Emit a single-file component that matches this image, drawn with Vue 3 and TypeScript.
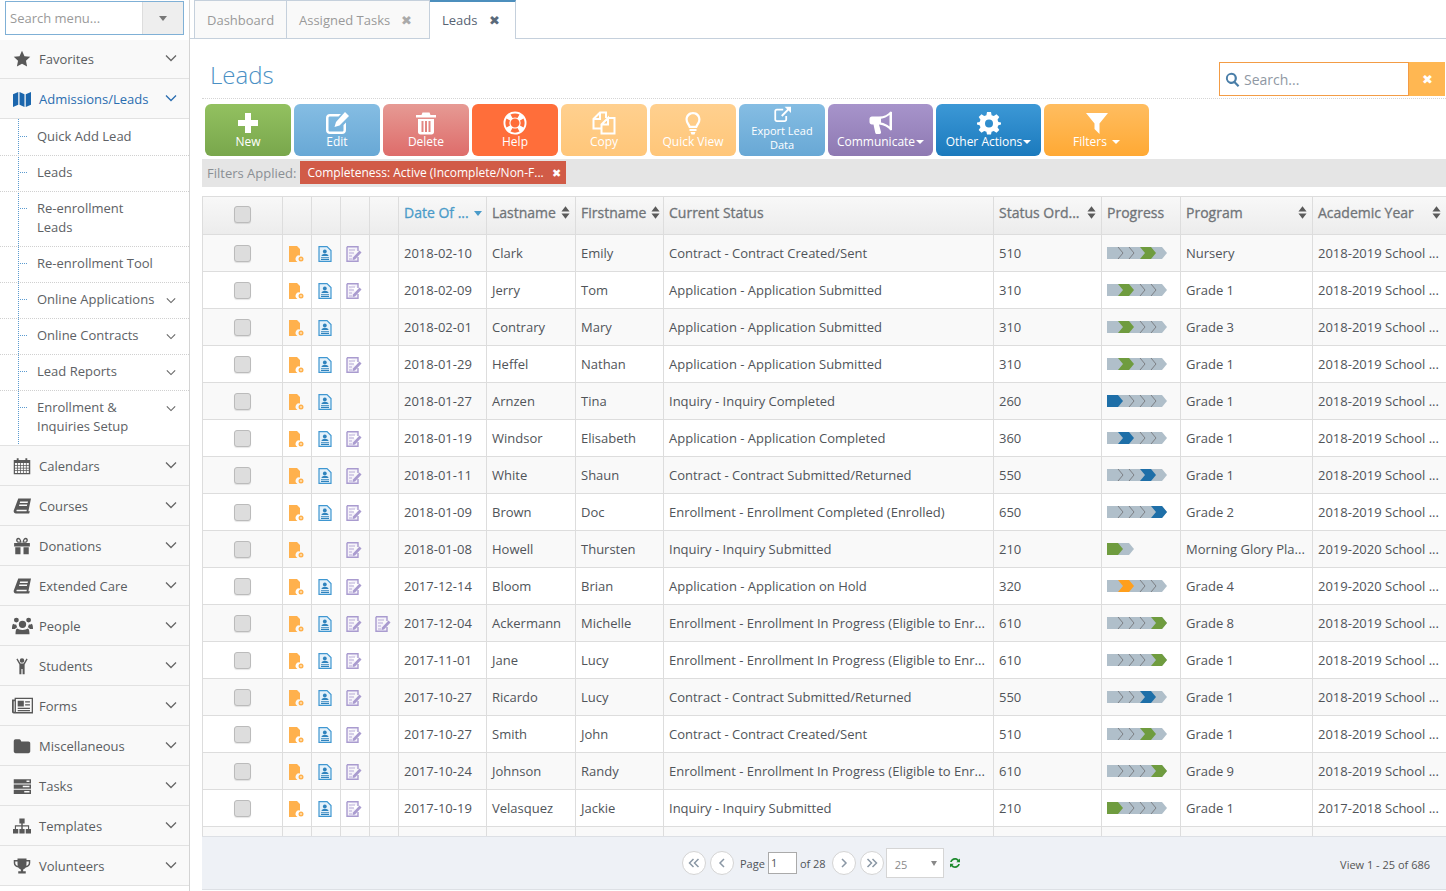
<script setup lang="ts">
const grid = (() => {
  let s = 'M1 4H5V1.5H7.5V4H16.5V1.5H19V4H23V23H1Z'
  for (let r = 0; r < 4; r++) for (let c = 0; c < 5; c++) {
    const x = 2.6 + c * 3.9, y = 8 + r * 3.6
    s += `M${x} ${y}h2.9v2.6h-2.9z`
  }
  return s
})()

const icons: Record<string, string> = {
  star: 'M12 1l3.3 7.2 7.7.9-5.7 5.3 1.5 7.6L12 18.2 5.2 22l1.5-7.6L1 9.1l7.7-.9z',
  map: 'M0 5.5L7 2.5V19.5L0 22.5ZM8.7 2.5L15.3 5.5V22.5L8.7 19.5ZM17 5.5L24 2.5V19.5L17 22.5Z',
  cal: grid,
  book: 'M7 2H24L20.5 19H22.5L21.5 22H4C1.5 22 .5 20 1 18ZM9.5 6L9 8H19.5L20 6ZM8.5 10L8 12H18.5L19 10ZM5 19H18L18.5 17H5.2C4.5 17 4.5 19 5 19Z',
  gift: 'M1.5 8H22.5V12.5H1.5ZM3 13.5H10V23H3ZM14 13.5H21V23H14ZM11.5 7.5H7C3.2 7.5 3.2 1 7 1C9.2 1 10.8 3.5 11.5 7.5ZM9.500 6C9 4 8 3 7 3C5.800 3 5.800 6 7 6ZM12.500 7.500C13.200 3.500 14.800 1 17 1C20.800 1 20.800 7.500 17 7.500ZM14.500 6H17C18.200 6 18.200 3 17 3C16 3 15 4 14.500 6Z',
  users: 'M12 6.500a4.200 4.200 0 1 1 0 8.400a4.200 4.200 0 0 1 0-8.400ZM5 3a2.800 2.800 0 1 1 0 5.600A2.800 2.800 0 0 1 5 3ZM19 3a2.800 2.800 0 1 1 0 5.600A2.800 2.800 0 0 1 19 3ZM6 15.500c1 1 3.500 1.500 6 1.500s5-.5 6-1.500c1.500.5 2 2.500 2 6.500H4c0-4 .5-6 2-6.500ZM1.500 10c1 .8 2 1 3.500 1 0 1 .3 2 1 3-1 .3-2 1-2.500 2H0c0-3 .3-5 1.500-6ZM22.500 10c1.200 1 1.500 3 1.500 6h-3.500c-.5-1-1.500-1.700-2.500-2 .7-1 1-2 1-3 1.500 0 2.500-.2 3.500-1Z',
  child: 'M12 1.500a3 3 0 1 1 0 6a3 3 0 0 1 0-6ZM4.500 3L6 2l4 6.500h4L18 2l1.500 1L15.500 10V23H12.800V16H11.200V23H8.500V10Z',
  paper: 'M0 5H3V3H24V21H2C1 21 0 20 0 19ZM2 7V19H3V7ZM4.500 4.500V19.500H22.500V4.500ZM6.500 6.500H13.500V13H6.500ZM15 7H20.500V8.500H15ZM15 10.500H20.500V12H15ZM6.500 14.500H20.500V16H6.500ZM6.500 17H20.500V18.500H6.500Z',
  folder: 'M1 6C1 4 2 3 3.500 3H8.500C10 3 10.500 4.500 11 6H20.500C22 6 23 7 23 8.500V19C23 20.500 22 21.500 20.500 21.500H3.500C2 21.500 1 20.500 1 19Z',
  tasks: 'M1 3H24V8.500H1ZM18 4.500V6.500H22V4.500ZM1 10H24V15.500H1ZM13 11.500V13.500H22V11.500ZM1 17H24V22.500H1ZM15 18.500V20.500H22V18.500Z',
  site: 'M8.500 2H15.500V8.500H13V11H21.500V16H24V22H17V16H20V12.500H13V16H15.500V22H8.500V16H11V12.500H4V16H7V22H0V16H2.500V11H11V8.500H8.500Z',
  trophy: 'M6 2H18V4H23V8C23 11.500 20.500 13.500 17 14C16 15.500 14.500 16.200 13.500 16.500V19H17V22H7V19H10.500V16.500C9.500 16.200 8 15.500 7 14C3.500 13.500 1 11.500 1 8V4H6ZM3 6V8C3 9.800 4.200 11.300 6.300 11.800C6 10 6 8 6 6ZM21 6H18C18 8 18 10 17.700 11.800C19.800 11.300 21 9.800 21 8Z',
  plus: 'M9 2H15V9H22V15H15V22H9V15H2V9H9Z',
  edit: 'M5 3H16L13.500 5.500H5C4 5.500 3.500 6 3.500 7V19C3.500 20 4 20.500 5 20.500H17C18 20.500 18.500 20 18.500 19V14L21 11.500V19C21 21.500 19.500 23 17 23H5C2.500 23 1 21.500 1 19V7C1 4.500 2.500 3 5 3ZM20 1L24 5L14.500 14.500L9.500 16L11 11Z',
  trash: 'M8.500 1.500H15.500L16.500 4H22V6.500H2V4H7.500ZM4 8H20V21C20 22.500 19 23.500 17.500 23.500H6.500C5 23.500 4 22.500 4 21ZM7.500 10V21H9.500V10ZM11 10V21H13V10ZM14.500 10V21H16.500V10Z',
  life: 'M12 .5a11.500 11.500 0 1 1 0 23a11.500 11.500 0 0 1 0-23ZM12 7.500a4.500 4.500 0 1 0 0 9a4.500 4.500 0 0 0 0-9ZM7.500 3.500L9.500 7C11 6.200 13 6.200 14.500 7L16.500 3.500C13.800 2 10.200 2 7.500 3.500ZM3.500 7.500C2 10.200 2 13.800 3.500 16.500L7 14.500C6.200 13 6.200 11 7 9.500ZM20.500 7.500L17 9.500C17.800 11 17.800 13 17 14.500L20.500 16.500C22 13.800 22 10.200 20.500 7.500ZM9.500 17L7.500 20.500C10.200 22 13.800 22 16.500 20.500L14.500 17C13 17.800 11 17.800 9.500 17Z',
  copy: 'M14 7V1.500H8L1.500 8V17.500H9.500M8 1.500V8H1.500M16 7H22.500V22.500H9.500V13.500L16 7V13.500H9.500',
  bulb: 'M12 1C16.800 1 19.500 4.500 19.500 8.500C19.500 12 17 14 16 17H8C7 14 4.500 12 4.500 8.500C4.500 4.500 7.200 1 12 1ZM12 3.200C8.800 3.200 6.700 5.800 6.700 8.500C6.700 11 8.700 12.500 9.500 14.800H14.500C15.300 12.500 17.300 11 17.300 8.500C17.300 5.800 15.200 3.200 12 3.200ZM8.500 18H15.500V20H8.500ZM9.500 21H14.500L13.500 23.500H10.500Z',
  ext: 'M4 4H13V6.500H4C3.500 6.500 3 7 3 7.500V19C3 19.500 3.500 20 4 20H15C15.500 20 16 19.500 16 19V14H18.500V19C18.500 21 17 22.500 15 22.500H4C2 22.500 .5 21 .5 19V7.500C.5 5.500 2 4 4 4ZM15 1H24V10L20.500 6.500L12 15L10 13L18.500 4.500Z',
  horn: 'M23 1V19L21.500 19.500C19 16.500 15 14 10 13.500L12 21C12.200 22 11.500 23 10.500 23H8C7 23 6.500 22.500 6.200 21.500L4.500 13.500H3C1.500 13.500 .5 12.500 .5 11V8C.5 6.500 1.500 5.500 3 5.500H10C15 5.500 19 3.500 21.500 .5ZM20.500 4C18 6 15 7.300 12 7.800V11.500C15 12 18 13.500 20.500 15.500Z',
  cog: 'M10 1H14L14.600 4.200L16.800 5.100L19.500 3.300L22.300 6.100L20.500 8.800L21.400 11L24 11.500V13.500L21.400 14.200L20.500 16.200L22.300 18.900L19.500 21.700L16.800 19.900L14.600 20.800L14 23.500H10L9.400 20.800L7.200 19.900L4.500 21.700L1.700 18.900L3.500 16.200L2.600 14.200L0 13.500V11.500L2.600 11L3.500 8.800L1.700 6.100L4.500 3.300L7.200 5.100L9.400 4.200ZM12 8.500a4 4 0 1 0 0 8a4 4 0 0 0 0-8Z',
  funnel: 'M1 2H23L14.500 12.500V23L9.500 18V12.500Z',
  search: 'M10 1a9 9 0 0 1 7.100 14.500L23 21.500L20.500 24L14.600 18A9 9 0 1 1 10 1ZM10 4.500a5.500 5.500 0 1 0 0 11a5.500 5.500 0 0 0 0-11Z',
  refresh: 'M12 2C15 2 17.700 3.300 19.500 5.300L22 3V10.500H14.500L17 8C15.700 6.500 14 5.500 12 5.500C9 5.500 6.500 7.500 5.700 10H2.200C3 5.500 7 2 12 2ZM2 13.500H9.500L7 16C8.300 17.500 10 18.500 12 18.500C15 18.500 17.500 16.500 18.300 14H21.800C21 18.500 17 22 12 22C9 22 6.300 20.700 4.500 18.700L2 21Z'
}

interface Side { label: string; icon: string; blue?: boolean; first?: boolean; wide?: boolean }
const topMenu: Side[] = [
  { label: 'Favorites', icon: 'star', first: true },
  { label: 'Admissions/Leads', icon: 'map', blue: true }
]
const subMenu = [
  { label: 'Quick Add Lead' },
  { label: 'Leads' },
  { label: 'Re-enrollment Leads', narrow: true },
  { label: 'Re-enrollment Tool' },
  { label: 'Online Applications', more: true },
  { label: 'Online Contracts', more: true },
  { label: 'Lead Reports', more: true },
  { label: 'Enrollment & Inquiries Setup', more: true, narrow: true }
]
const restMenu: Side[] = [
  { label: 'Calendars', icon: 'cal' },
  { label: 'Courses', icon: 'book' },
  { label: 'Donations', icon: 'gift' },
  { label: 'Extended Care', icon: 'book' },
  { label: 'People', icon: 'users', wide: true },
  { label: 'Students', icon: 'child' },
  { label: 'Forms', icon: 'paper', wide: true },
  { label: 'Miscellaneous', icon: 'folder' },
  { label: 'Tasks', icon: 'tasks' },
  { label: 'Templates', icon: 'site' },
  { label: 'Volunteers', icon: 'trophy' }
]

const buttons = [
  { label: 'New', icon: 'plus', cls: 'b-new' },
  { label: 'Edit', icon: 'edit', cls: 'b-edit' },
  { label: 'Delete', icon: 'trash', cls: 'b-del' },
  { label: 'Help', icon: 'life', cls: 'b-help' },
  { label: 'Copy', icon: 'copy', cls: 'b-light b-copy' },
  { label: 'Quick View', icon: 'bulb', cls: 'b-light' },
  { label: 'Export Lead Data', icon: 'ext', cls: 'b-edit b-export' },
  { label: 'Communicate', icon: 'horn', cls: 'b-comm b-wide', caret: true },
  { label: 'Other Actions', icon: 'cog', cls: 'b-other b-wide', caret: true },
  { label: 'Filters', icon: 'funnel', cls: 'b-filter b-wide', caret: true, gap: true }
]

const heads = [
  { label: 'Lastname', sort: true },
  { label: 'Firstname', sort: true },
  { label: 'Current Status' },
  { label: 'Status Ord...', sort: true, spread: true },
  { label: 'Progress' },
  { label: 'Program', sort: true, spread: true },
  { label: 'Academic Year', sort: true, spread: true }
]

const G = '#6f9c3f', B = '#1e6fa8', O = '#ff9f1c'
const S = '2018-2019 School ...', S2 = '2019-2020 School ...', S3 = '2017-2018 School ...'
const EIP = 'Enrollment - Enrollment In Progress (Eligible to Enr...'
const AS = 'Application - Application Submitted'
const rows = [
  { d: '2018-02-10', l: 'Clark', f: 'Emily', s: 'Contract - Contract Created/Sent', o: 510, i: 3, c: G, p: 'Nursery', y: S },
  { d: '2018-02-09', l: 'Jerry', f: 'Tom', s: AS, o: 310, i: 1, c: G, p: 'Grade 1', y: S },
  { d: '2018-02-01', l: 'Contrary', f: 'Mary', s: AS, o: 310, i: 1, c: G, p: 'Grade 3', y: S, noPurple: true },
  { d: '2018-01-29', l: 'Heffel', f: 'Nathan', s: AS, o: 310, i: 1, c: G, p: 'Grade 1', y: S },
  { d: '2018-01-27', l: 'Arnzen', f: 'Tina', s: 'Inquiry - Inquiry Completed', o: 260, i: 0, c: B, p: 'Grade 1', y: S, noPurple: true },
  { d: '2018-01-19', l: 'Windsor', f: 'Elisabeth', s: 'Application - Application Completed', o: 360, i: 1, c: B, p: 'Grade 1', y: S },
  { d: '2018-01-11', l: 'White', f: 'Shaun', s: 'Contract - Contract Submitted/Returned', o: 550, i: 3, c: B, p: 'Grade 1', y: S },
  { d: '2018-01-09', l: 'Brown', f: 'Doc', s: 'Enrollment - Enrollment Completed (Enrolled)', o: 650, i: 4, c: B, p: 'Grade 2', y: S },
  { d: '2018-01-08', l: 'Howell', f: 'Thursten', s: 'Inquiry - Inquiry Submitted', o: 210, i: 0, c: G, p: 'Morning Glory Pla...', y: S2, noBlue: true, short: true },
  { d: '2017-12-14', l: 'Bloom', f: 'Brian', s: 'Application - Application on Hold', o: 320, i: 1, c: O, p: 'Grade 4', y: S2 },
  { d: '2017-12-04', l: 'Ackermann', f: 'Michelle', s: EIP, o: 610, i: 4, c: G, p: 'Grade 8', y: S, extra: true },
  { d: '2017-11-01', l: 'Jane', f: 'Lucy', s: EIP, o: 610, i: 4, c: G, p: 'Grade 1', y: S },
  { d: '2017-10-27', l: 'Ricardo', f: 'Lucy', s: 'Contract - Contract Submitted/Returned', o: 550, i: 3, c: B, p: 'Grade 1', y: S },
  { d: '2017-10-27', l: 'Smith', f: 'John', s: 'Contract - Contract Created/Sent', o: 510, i: 3, c: G, p: 'Grade 1', y: S },
  { d: '2017-10-24', l: 'Johnson', f: 'Randy', s: EIP, o: 610, i: 4, c: G, p: 'Grade 9', y: S },
  { d: '2017-10-19', l: 'Velasquez', f: 'Jackie', s: 'Inquiry - Inquiry Submitted', o: 210, i: 0, c: G, p: 'Grade 1', y: S3 },
  { d: '', l: '', f: '', s: '', o: '', i: -1, c: G, p: '', y: '', blank: true }
]

function chevs(r: { i: number; short?: boolean }): number[] {
  const n = r.short ? 2 : 5
  const out: number[] = []
  for (let k = 1; k < n; k++) if (k !== r.i && k !== r.i + 1) out.push(k)
  return out
}
function basePts(r: { short?: boolean }): string {
  const e = r.short ? 27 : 60
  return `0,0 ${e - 5},0 ${e},6 ${e - 5},12 0,12`
}
function activePts(i: number): string {
  const x = 11 * i
  return i === 0
    ? '0,0 11,0 16,6 11,12 0,12'
    : `${x},0 ${x + 11},0 ${x + 16},6 ${x + 11},12 ${x},12 ${x + 5},6`
}
</script>

<template>
  <div class="app">
    <aside class="side">
      <div class="search-wrap">
        <div class="menu-search">
          <span class="ms-text">Search menu...</span>
          <span class="ms-btn"><i class="tri"></i></span>
        </div>
      </div>
      <div
        v-for="m in topMenu"
        :key="m.label"
        class="item"
        :class="{ blue: m.blue, first: m.first }"
      >
        <svg class="ic" viewBox="0 0 24 24"><path :d="icons[m.icon]" fill-rule="evenodd" /></svg>
        <span class="grow">{{ m.label }}</span>
        <svg class="chev" viewBox="0 0 12 8"><path d="M1 1.500L6 6.500L11 1.500" /></svg>
      </div>
      <ul class="sub">
        <li v-for="s in subMenu" :key="s.label">
          <span class="sub-label" :class="{ narrow: s.narrow }">{{ s.label }}</span>
          <svg v-if="s.more" class="chev small" viewBox="0 0 12 8"><path d="M1 1.500L6 6.500L11 1.500" /></svg>
        </li>
      </ul>
      <div v-for="m in restMenu" :key="m.label" class="item">
        <svg class="ic" :class="{ wide: m.wide }" viewBox="0 0 24 24"><path :d="icons[m.icon]" fill-rule="evenodd" /></svg>
        <span class="grow">{{ m.label }}</span>
        <svg class="chev" viewBox="0 0 12 8"><path d="M1 1.500L6 6.500L11 1.500" /></svg>
      </div>
    </aside>

    <main class="main">
      <nav class="tabs">
        <div class="tab t1">Dashboard</div>
        <div class="tab t2">Assigned Tasks <span class="x">✖</span></div>
        <div class="tab t3">Leads <span class="x dark">✖</span></div>
      </nav>

      <div class="content">
        <header class="head">
          <h1>Leads</h1>
          <div class="searchbox">
            <div class="sb-field">
              <svg class="sb-ic" viewBox="0 0 24 24"><path :d="icons.search" /></svg>
              <span>Search...</span>
            </div>
            <div class="sb-x">✖</div>
          </div>
        </header>

        <div class="toolbar">
          <div v-for="b in buttons" :key="b.label" class="tb" :class="b.cls">
            <svg class="tb-ic" viewBox="0 0 24 24"><path :d="icons[b.icon]" fill-rule="evenodd" /></svg>
            <span class="tb-l">{{ b.label }}<i v-if="b.caret" class="caret" :class="{ gap: b.gap }"></i></span>
          </div>
        </div>

        <div class="filters">
          <span>Filters Applied:</span>
          <span class="tag"><span>Completeness: Active (Incomplete/Non-F...</span><b>✖</b></span>
        </div>

        <div class="table-wrap">
          <table>
            <colgroup>
              <col class="c0" /><col class="c1" /><col class="c1" /><col class="c1" /><col class="c1" />
              <col class="c2" /><col class="c3" /><col class="c2" /><col class="c4" />
              <col class="c5" /><col class="c6" /><col class="c7" /><col class="c8" />
            </colgroup>
            <thead>
              <tr>
                <th class="ctr"><span class="cb"></span></th>
                <th></th><th></th><th></th><th></th>
                <th class="active">
                  <span class="th-in">Date Of ...<i class="down"></i></span>
                </th>
                <th v-for="h in heads" :key="h.label">
                  <span class="th-in" :class="{ spread: h.spread }">
                    {{ h.label }}
                    <svg v-if="h.sort" class="sort" viewBox="0 0 10 14"><path d="M5 0L9.500 5.800H.5ZM5 14L.5 8.200H9.500Z" /></svg>
                  </span>
                </th>
              </tr>
            </thead>
            <tbody>
              <tr v-for="(r, idx) in rows" :key="idx" :class="{ odd: idx % 2 === 0 }">
                <td class="ctr"><span v-if="!r.blank" class="cb"></span></td>
                <td class="ctr">
                  <svg v-if="!r.blank" class="doc" viewBox="0 0 16 16">
                    <path fill="#ffb14d" d="M1 0H9L12 3V9.500A3.500 3.500 0 0 0 9.500 16H1Z" />
                    <circle cx="13" cy="13" r="2.500" fill="#ffb14d" />
                    <circle cx="13" cy="13" r="1" fill="#ffe3b8" />
                  </svg>
                </td>
                <td class="ctr">
                  <svg v-if="!r.blank && !r.noBlue" class="doc" viewBox="0 0 16 16">
                    <path fill="#e4f1fa" stroke="#3f97d1" stroke-width="1.200" d="M2 .6H10L14 4.600V15.400H2Z" />
                    <circle cx="7.800" cy="5.500" r="1.900" fill="#2f83bd" />
                    <path fill="#2f83bd" d="M4.500 10C4.500 8.500 6 8 8 8S11.500 8.500 11.500 10ZM4 11.200H12V12.200H4ZM4 13H12V14H4Z" />
                  </svg>
                </td>
                <td class="ctr">
                  <svg v-if="!r.blank && !r.noPurple" class="doc" viewBox="0 0 16 16">
                    <path fill="#f5f2fa" stroke="#a99bcf" stroke-width="1.400" d="M1 .7H12V5M12 11V15.300H1V.7" />
                    <path stroke="#b5a9d6" stroke-width="1.200" d="M3 4H9M3 7H8M3 10H6M3 13H6" />
                    <path fill="#a99bcf" d="M13.500 4.500L15.500 6.500L9 13.500L6.500 14L7 11.500Z" />
                  </svg>
                </td>
                <td class="ctr">
                  <svg v-if="r.extra" class="doc" viewBox="0 0 16 16">
                    <path fill="#f5f2fa" stroke="#a99bcf" stroke-width="1.400" d="M1 .7H12V5M12 11V15.300H1V.7" />
                    <path stroke="#b5a9d6" stroke-width="1.200" d="M3 4H9M3 7H8M3 10H6M3 13H6" />
                    <path fill="#a99bcf" d="M13.500 4.500L15.500 6.500L9 13.500L6.500 14L7 11.500Z" />
                  </svg>
                </td>
                <td>{{ r.d }}</td>
                <td>{{ r.l }}</td>
                <td>{{ r.f }}</td>
                <td>{{ r.s }}</td>
                <td>{{ r.o }}</td>
                <td>
                  <svg v-if="!r.blank" class="prog" viewBox="0 0 60 12">
                    <polygon :points="basePts(r)" fill="#b0bfca" />
                    <path
                      v-for="k in chevs(r)"
                      :key="k"
                      :d="`M${11 * k} 0L${11 * k + 5} 6L${11 * k} 12`"
                      fill="none"
                      stroke="#7c7f84"
                    />
                    <polygon :points="activePts(r.i)" :fill="r.c" />
                  </svg>
                </td>
                <td>{{ r.p }}</td>
                <td>{{ r.y }}</td>
              </tr>
            </tbody>
          </table>
        </div>

        <footer class="foot">
          <div class="pager">
            <span class="pg"><svg viewBox="0 0 12 10"><path d="M5.500 1L1.500 5L5.500 9M10.500 1L6.500 5L10.500 9" /></svg></span>
            <span class="pg"><svg viewBox="0 0 12 10"><path d="M8 1L4 5L8 9" /></svg></span>
            <span class="pl">Page</span>
            <span class="pi">1</span>
            <span class="po">of 28</span>
            <span class="pg"><svg viewBox="0 0 12 10"><path d="M4 1L8 5L4 9" /></svg></span>
            <span class="pg"><svg viewBox="0 0 12 10"><path d="M1.500 1L5.500 5L1.500 9M6.500 1L10.500 5L6.500 9" /></svg></span>
            <span class="sel"><span>25</span><i class="tri small"></i></span>
            <svg class="refresh" viewBox="0 0 24 24"><path :d="icons.refresh" /></svg>
          </div>
          <div class="view">View 1 - 25 of 686</div>
        </footer>
      </div>
    </main>
  </div>
</template>

<style>
html, body { margin: 0; padding: 0; background: #fff; }
</style>

<style scoped>
.app {
  display: flex;
  width: 1446px;
  height: 891px;
  overflow: hidden;
  font-family: "Open Sans", "Liberation Sans", sans-serif;
  font-size: 13px;
  color: #4f5358;
  background: #fff;
}
.side {
  width: 190px;
  flex: none;
  box-sizing: border-box;
  border-right: 1px solid #d4d4d4;
  background: #fff;
}
.search-wrap { height: 40px; box-sizing: border-box; padding: 1px 5px 0; }
.menu-search {
  display: flex;
  height: 34px;
  width: 179px;
  box-sizing: border-box;
  border: 1px solid #7fb0d6;
  background: #fff;
}
.ms-text { flex: 1; padding-left: 4px; line-height: 32px; font-size: 13px; color: #9a9a9a; }
.ms-btn {
  width: 40px;
  display: flex;
  align-items: center;
  justify-content: center;
  background: #eee;
  border-left: 1px solid #ddd;
}
.tri { width: 0; height: 0; border: 4px solid transparent; border-top: 5px solid #777; border-bottom: 0; display: block; }
.item {
  height: 40px;
  box-sizing: border-box;
  display: flex;
  align-items: center;
  background: #f9f9f9;
  border-bottom: 1px solid #e2e2e2;
  color: #5a5d61;
}
.item.first { height: 39px; }
.item.blue { color: #2a6db0; }
.ic { width: 18px; height: 18px; margin-left: 13px; margin-right: 8px; fill: #585858; flex: none; }
.ic.wide { width: 21px; height: 21px; margin-left: 12px; margin-right: 6px; }
.blue .ic { fill: #1b66ad; }
.grow { flex: 1; }
.chev { width: 12px; height: 8px; margin-right: 12px; fill: none; stroke: #666; stroke-width: 1.300; position: relative; top: -1px; }
.blue .chev { stroke: #2a6db0; }
.chev.small { width: 10px; height: 7px; margin-right: 13px; top: 7px; }
.sub { list-style: none; margin: 0; padding: 1px 0 0; position: relative; }
.sub::before {
  content: "";
  position: absolute;
  left: 18px;
  top: 0;
  bottom: 0;
  border-left: 1px dotted #5b9bd0;
}
.sub li {
  position: relative;
  display: flex;
  align-items: flex-start;
  justify-content: space-between;
  padding: 7px 0 9px 37px;
  line-height: 19px;
  border-bottom: 1px dotted #d0d0d0;
  color: #5d6165;
}
.sub li:last-child { border-bottom: 1px solid #e2e2e2; }
.sub li::before {
  content: "";
  position: absolute;
  left: 20px;
  top: 16px;
  width: 7px;
  border-top: 1px dotted #5b9bd0;
}
.sub-label.narrow { width: 120px; }
.main { flex: 1; min-width: 0; display: flex; flex-direction: column; }
.tabs {
  height: 39px;
  box-sizing: border-box;
  display: flex;
  padding-left: 4px;
  border-bottom: 1px solid #c5d0dc;
  flex: none;
}
.tab {
  height: 39px;
  box-sizing: border-box;
  padding-top: 10px;
  border: 1px solid #c5d0dc;
  border-left: 0;
  background: #f9f9f9;
  color: #999;
  line-height: 18px;
}
.t1 { width: 93px; border-left: 1px solid #c5d0dc; padding-left: 12px; }
.t2 { width: 143px; padding-left: 12px; }
.t3 {
  width: 86px;
  padding-left: 12px;
  background: #fff;
  color: #576373;
  border-top: 2px solid #4c8fbd;
  border-bottom: 0;
  padding-top: 9px;
}
.x { margin-left: 7px; font-size: 13px; color: #aaa; }
.x.dark { color: #5a6a7a; margin-left: 8px; }
.content {
  flex: 1;
  min-height: 0;
  display: flex;
  flex-direction: column;
  padding-left: 12px;
}
.head {
  height: 60px;
  flex: none;
  box-sizing: border-box;
  display: flex;
  justify-content: space-between;
  padding: 22px 1px 0 8px;
  border-bottom: 1px dotted #d5d5d5;
}
h1 { margin: 0; font-size: 24px; font-weight: 300; line-height: 28px; color: #4a90c4; }
.searchbox { display: flex; height: 34px; margin-top: 1px; }
.sb-field {
  width: 190px;
  box-sizing: border-box;
  border: 1px solid #f39c45;
  display: flex;
  align-items: center;
  padding-left: 5px;
  font-size: 14px;
  color: #8f98a3;
}
.sb-ic { width: 15px; height: 15px; fill: #4a7ea8; margin-right: 4px; }
.sb-x {
  width: 36px;
  background: #ffb752;
  color: #fff;
  font-size: 13px;
  display: flex;
  align-items: center;
  justify-content: center;
}
.toolbar { display: flex; gap: 3px; padding: 5px 0 0 3px; flex: none; }
.tb {
  width: 86px;
  height: 52px;
  box-sizing: border-box;
  border-radius: 6px;
  color: #fff;
  display: flex;
  flex-direction: column;
  align-items: center;
  padding-top: 7px;
  font-size: 12px;
  line-height: 14px;
  text-align: center;
}
.tb-ic { width: 24px; height: 24px; fill: #fff; flex: none; }
.b-copy .tb-ic { fill: none; stroke: #fff; stroke-width: 2; }
.b-wide { width: 105px; }
.b-new { background: linear-gradient(#93c160, #79a74c); }
.b-edit { background: linear-gradient(#85bde3, #68a8d5); }
.b-del { background: linear-gradient(#e69a94, #de6c6a); }
.b-help { background: #ff6e3a; }
.b-light { background: linear-gradient(#ffd08f, #ffc679); }
.b-comm { background: linear-gradient(#a794cb, #8e79b2); }
.b-other { background: linear-gradient(#3c98d6, #1b7abd); }
.b-filter { background: linear-gradient(#ffbd60, #ffa934); }
.b-export { padding-top: 2px; font-size: 11px; }
.b-export .tb-ic { width: 17px; height: 17px; margin-bottom: 1px; }
.b-export .tb-l { width: 70px; }
.caret {
  display: inline-block;
  width: 0;
  height: 0;
  border: 4px solid transparent;
  border-top: 4px solid #fff;
  border-bottom: 0;
  margin-left: 1px;
  vertical-align: 2px;
}
.caret.gap { margin-left: 5px; }
.filters {
  height: 28px;
  margin-top: 3px;
  flex: none;
  background: #e5e5e5;
  display: flex;
  align-items: center;
  padding-left: 5px;
  color: #8a8f94;
  gap: 4px;
}
.tag {
  height: 23px;
  width: 266px;
  box-sizing: border-box;
  padding: 0 5px 0 7px;
  background: #d15b47;
  color: #fff;
  white-space: nowrap;
  font-size: 12px;
  display: flex;
  align-items: center;
  justify-content: space-between;
  margin-top: -1px;
}
.tag b { font-size: 11px; font-weight: 400; }
.table-wrap {
  margin-top: 9px;
  flex: 1;
  min-height: 0;
  overflow: hidden;
  border-top: 1px solid #ddd;
  border-left: 1px solid #ddd;
}
table { border-collapse: separate; border-spacing: 0; table-layout: fixed; width: 1243px; }
.c0 { width: 80px; }
.c1 { width: 29px; }
.c2 { width: 88px; }
.c3 { width: 89px; }
.c4 { width: 330px; }
.c5 { width: 108px; }
.c6 { width: 79px; }
.c7 { width: 132px; }
.c8 { width: 133px; }
th {
  height: 38px;
  box-sizing: border-box;
  padding: 0 5px 7px;
  text-align: left;
  font-size: 14px;
  font-weight: 500;
  color: #707478;
  -webkit-text-stroke: .3px #707478;
  white-space: nowrap;
  background: linear-gradient(#f8f8f8, #ececec);
  border-right: 1px solid #ddd;
  border-bottom: 1px solid #ddd;
}
td {
  height: 37px;
  box-sizing: border-box;
  padding: 0 5px;
  white-space: nowrap;
  overflow: hidden;
  background: #fff;
  border-right: 1px solid #ddd;
  border-bottom: 1px solid #ddd;
  color: #505459;
}
.odd td { background: #f9f9f9; }
th:last-child, td:last-child { border-right: 0; }
th.ctr { padding: 0 0 3px; text-align: center; }
td.ctr { text-align: center; padding: 0; }
.th-in { display: flex; align-items: center; gap: 5px; }
.spread { justify-content: space-between; }
.active { color: #4a9bc9; -webkit-text-stroke: .3px #4a9bc9; }
.down {
  width: 0;
  height: 0;
  border: 4.500px solid transparent;
  border-top: 5px solid #4a9bc9;
  border-bottom: 0;
  margin-top: 3px;
}
.sort { width: 9px; height: 13px; fill: #5a5a5a; flex: none; }
.cb {
  display: inline-block;
  width: 17px;
  height: 17px;
  box-sizing: border-box;
  vertical-align: middle;
  border: 1px solid #bbb;
  border-radius: 3px;
  background: #ddd;
  box-shadow: 0 1px 1px rgba(0, 0, 0, .1);
  position: relative;
  top: -1px;
}
.doc { width: 16px; height: 16px; vertical-align: middle; position: relative; left: -1px; }
.prog { width: 60px; height: 12px; display: block; overflow: visible; }
.foot {
  height: 54px;
  flex: none;
  margin-bottom: 1px;
  box-sizing: border-box;
  display: flex;
  align-items: center;
  justify-content: space-between;
  background: #eef1f6;
  border-top: 1px solid #dde0e5;
  border-bottom: 1px solid #dde0e5;
  padding: 0 16px 0 480px;
  font-size: 11px;
  color: #505459;
}
.pager { display: flex; align-items: center; }
.pg {
  width: 24px;
  height: 24px;
  box-sizing: border-box;
  border-radius: 50%;
  border: 1px solid #d4d4d4;
  background: #fff;
  margin-right: 4px;
  display: flex;
  align-items: center;
  justify-content: center;
}
.pg svg { width: 12px; height: 10px; fill: none; stroke: #8a97a5; stroke-width: 1.500; }
.pl { margin-left: 2px; margin-right: 3px; }
.pi {
  width: 29px;
  height: 22px;
  box-sizing: border-box;
  border: 1px solid #aaa;
  background: #fff;
  line-height: 20px;
  padding-left: 2px;
  margin-right: 3px;
}
.po { margin-right: 6px; }
.sel {
  width: 58px;
  height: 30px;
  box-sizing: border-box;
  margin-left: -2px;
  border: 1px solid #d5d5d5;
  background: #fff;
  display: flex;
  align-items: center;
  justify-content: space-between;
  padding: 3px 6px 0 8px;
  color: #8a8a8a;
}
.tri.small { margin-top: -3px; border-width: 3px; border-top-width: 5px; border-top-color: #888; border-bottom: 0; }
.refresh { width: 12px; height: 12px; fill: #1d8a2e; margin-left: 5px; }
.view { color: #555; position: relative; top: 1px; }
</style>
